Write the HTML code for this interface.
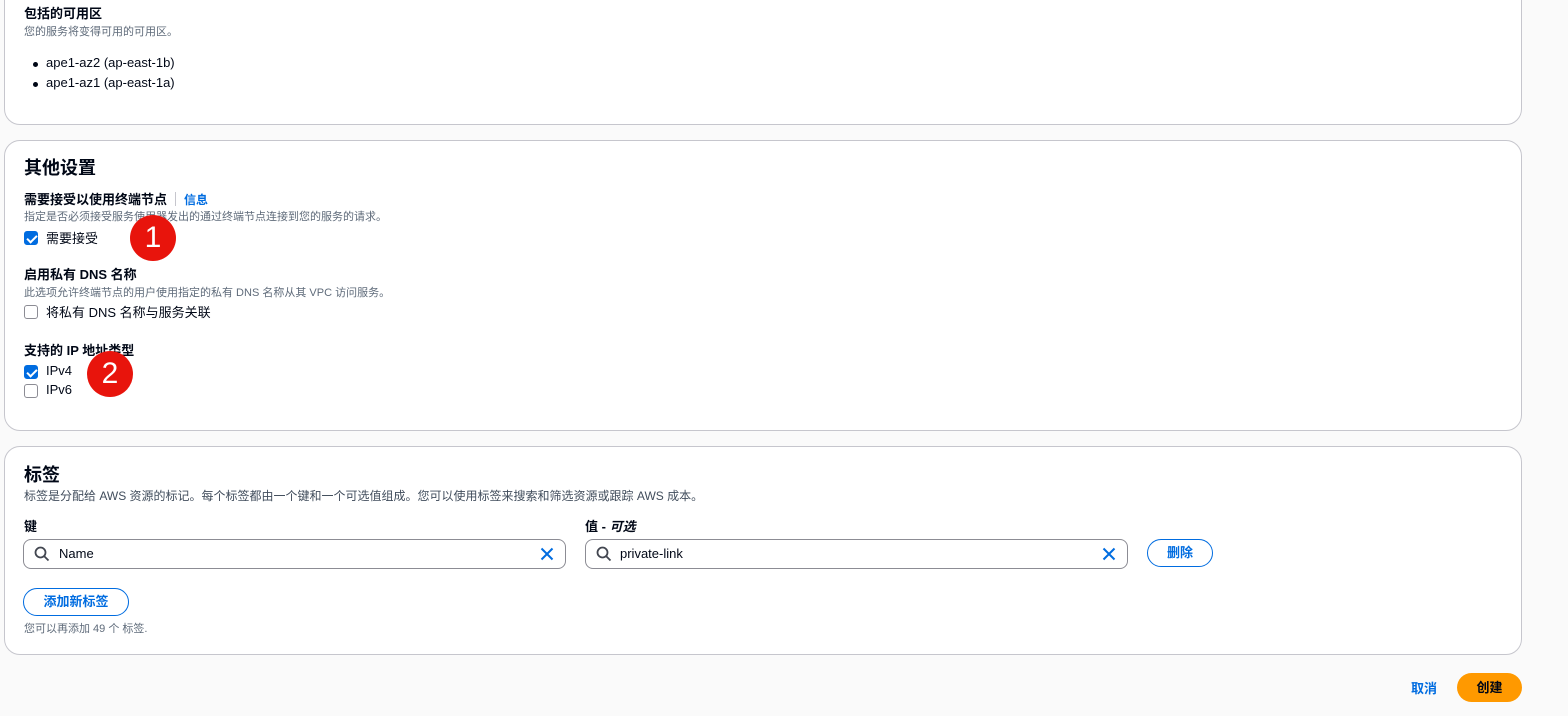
<!DOCTYPE html>
<html><head><meta charset="utf-8"><style>
*{margin:0;padding:0;box-sizing:border-box}
body{width:1568px;height:716px;background:#fafafa;font-family:"Liberation Sans","Noto Sans CJK SC",sans-serif;color:#000716;position:relative;overflow:hidden}
.card{position:absolute;left:4px;width:1518px;background:#fff;border:1px solid #c6c6cd;border-radius:16px}
.a{position:absolute;white-space:nowrap}
.h2{font-size:18px;font-weight:bold}
.lbl{font-size:13px;font-weight:bold}
.desc{font-size:11px;color:#5f6b7a}
.t{font-size:13px}
.cb{position:absolute;width:14px;height:14px;border:1.5px solid #8c8c94;border-radius:3px;background:#fff}
.cb.on{background:#006ce0;border-color:#006ce0}
.cb.on:after{content:"";position:absolute;left:3.5px;top:0.5px;width:4px;height:8px;border:solid #fff;border-width:0 2px 2px 0;transform:rotate(45deg)}
.badge{position:absolute;width:46px;height:46px;border-radius:50%;background:#e8140c;color:#fff;font-size:30px;text-align:center;line-height:46px;font-family:"Liberation Sans",sans-serif}
.inp{position:absolute;height:30px;border:1px solid #8c8c94;border-radius:8px;background:#fff}
.btn{position:absolute;border:1.5px solid #006ce0;border-radius:20px;color:#006ce0;font-weight:bold;font-size:13px;text-align:center}
</style></head><body>
<div class="card" style="top:-20px;height:145px"></div>
<div class="a lbl" style="left:24px;top:3px">包括的可用区</div>
<div class="a desc" style="left:24px;top:23px">您的服务将变得可用的可用区。</div>
<div class="a t" style="left:46px;top:55px">ape1-az2 (ap-east-1b)</div>
<div class="a t" style="left:46px;top:75px">ape1-az1 (ap-east-1a)</div>
<div class="a" style="left:33px;top:62px;width:5px;height:5px;border-radius:50%;background:#000716"></div>
<div class="a" style="left:33px;top:82px;width:5px;height:5px;border-radius:50%;background:#000716"></div>

<div class="card" style="top:140px;height:291px"></div>
<div class="a h2" style="left:24px;top:154px">其他设置</div>
<div class="a lbl" style="left:24px;top:189px">需要接受以使用终端节点</div>
<div class="a" style="left:175px;top:192px;width:1px;height:14px;background:#c6c6cd"></div>
<div class="a" style="left:184px;top:191px;font-size:12px;font-weight:bold;color:#006ce0">信息</div>
<div class="a desc" style="left:24px;top:208px">指定是否必须接受服务使用器发出的通过终端节点连接到您的服务的请求。</div>
<div class="cb on" style="left:24px;top:231px"></div>
<div class="a t" style="left:46px;top:228px">需要接受</div>
<div class="a lbl" style="left:24px;top:264px">启用私有 DNS 名称</div>
<div class="a desc" style="left:24px;top:284px">此选项允许终端节点的用户使用指定的私有 DNS 名称从其 VPC 访问服务。</div>
<div class="cb" style="left:24px;top:305px"></div>
<div class="a t" style="left:46px;top:302px">将私有 DNS 名称与服务关联</div>
<div class="a lbl" style="left:24px;top:340px">支持的 IP 地址类型</div>
<div class="cb on" style="left:24px;top:365px"></div>
<div class="a t" style="left:46px;top:363px">IPv4</div>
<div class="cb" style="left:24px;top:384px"></div>
<div class="a t" style="left:46px;top:382px">IPv6</div>
<div class="badge" style="left:130px;top:215px">1</div>
<div class="badge" style="left:87px;top:351px">2</div>

<div class="card" style="top:446px;height:209px"></div>
<div class="a h2" style="left:24px;top:461px">标签</div>
<div class="a" style="left:24px;top:487px;font-size:12px;color:#414d5c">标签是分配给 AWS 资源的标记。每个标签都由一个键和一个可选值组成。您可以使用标签来搜索和筛选资源或跟踪 AWS 成本。</div>
<div class="a lbl" style="left:24px;top:516px">键</div>
<div class="a lbl" style="left:585px;top:516px">值 - <i>可选</i></div>
<div class="inp" style="left:23px;top:539px;width:543px"></div>
<div class="inp" style="left:585px;top:539px;width:543px"></div>
<svg class="a" style="left:33px;top:545px" width="18" height="18" viewBox="0 0 18 18"><circle cx="7.5" cy="7.5" r="5" fill="none" stroke="#424650" stroke-width="1.8"/><path d="M11 11l4.5 4.5" stroke="#424650" stroke-width="1.8"/></svg>
<svg class="a" style="left:595px;top:545px" width="18" height="18" viewBox="0 0 18 18"><circle cx="7.5" cy="7.5" r="5" fill="none" stroke="#424650" stroke-width="1.8"/><path d="M11 11l4.5 4.5" stroke="#424650" stroke-width="1.8"/></svg>
<div class="a t" style="left:59px;top:546px">Name</div>
<div class="a t" style="left:620px;top:546px">private-link</div>
<svg class="a" style="left:540px;top:547px" width="14" height="14" viewBox="0 0 14 14"><path d="M1.5 1.5l11 11M12.5 1.5l-11 11" stroke="#006ce0" stroke-width="2"/></svg>
<svg class="a" style="left:1102px;top:547px" width="14" height="14" viewBox="0 0 14 14"><path d="M1.5 1.5l11 11M12.5 1.5l-11 11" stroke="#006ce0" stroke-width="2"/></svg>
<div class="btn" style="left:1147px;top:539px;width:66px;height:28px;line-height:25px">删除</div>
<div class="btn" style="left:23px;top:588px;width:106px;height:28px;line-height:25px">添加新标签</div>
<div class="a desc" style="left:24px;top:620px">您可以再添加 49 个 标签.</div>

<div class="a" style="left:1411px;top:678px;font-size:13px;font-weight:bold;color:#006ce0">取消</div>
<div class="a" style="left:1457px;top:673px;width:65px;height:29px;border-radius:16px;background:#ff9900;font-size:13px;font-weight:bold;text-align:center;line-height:29px">创建</div>
</body></html>
